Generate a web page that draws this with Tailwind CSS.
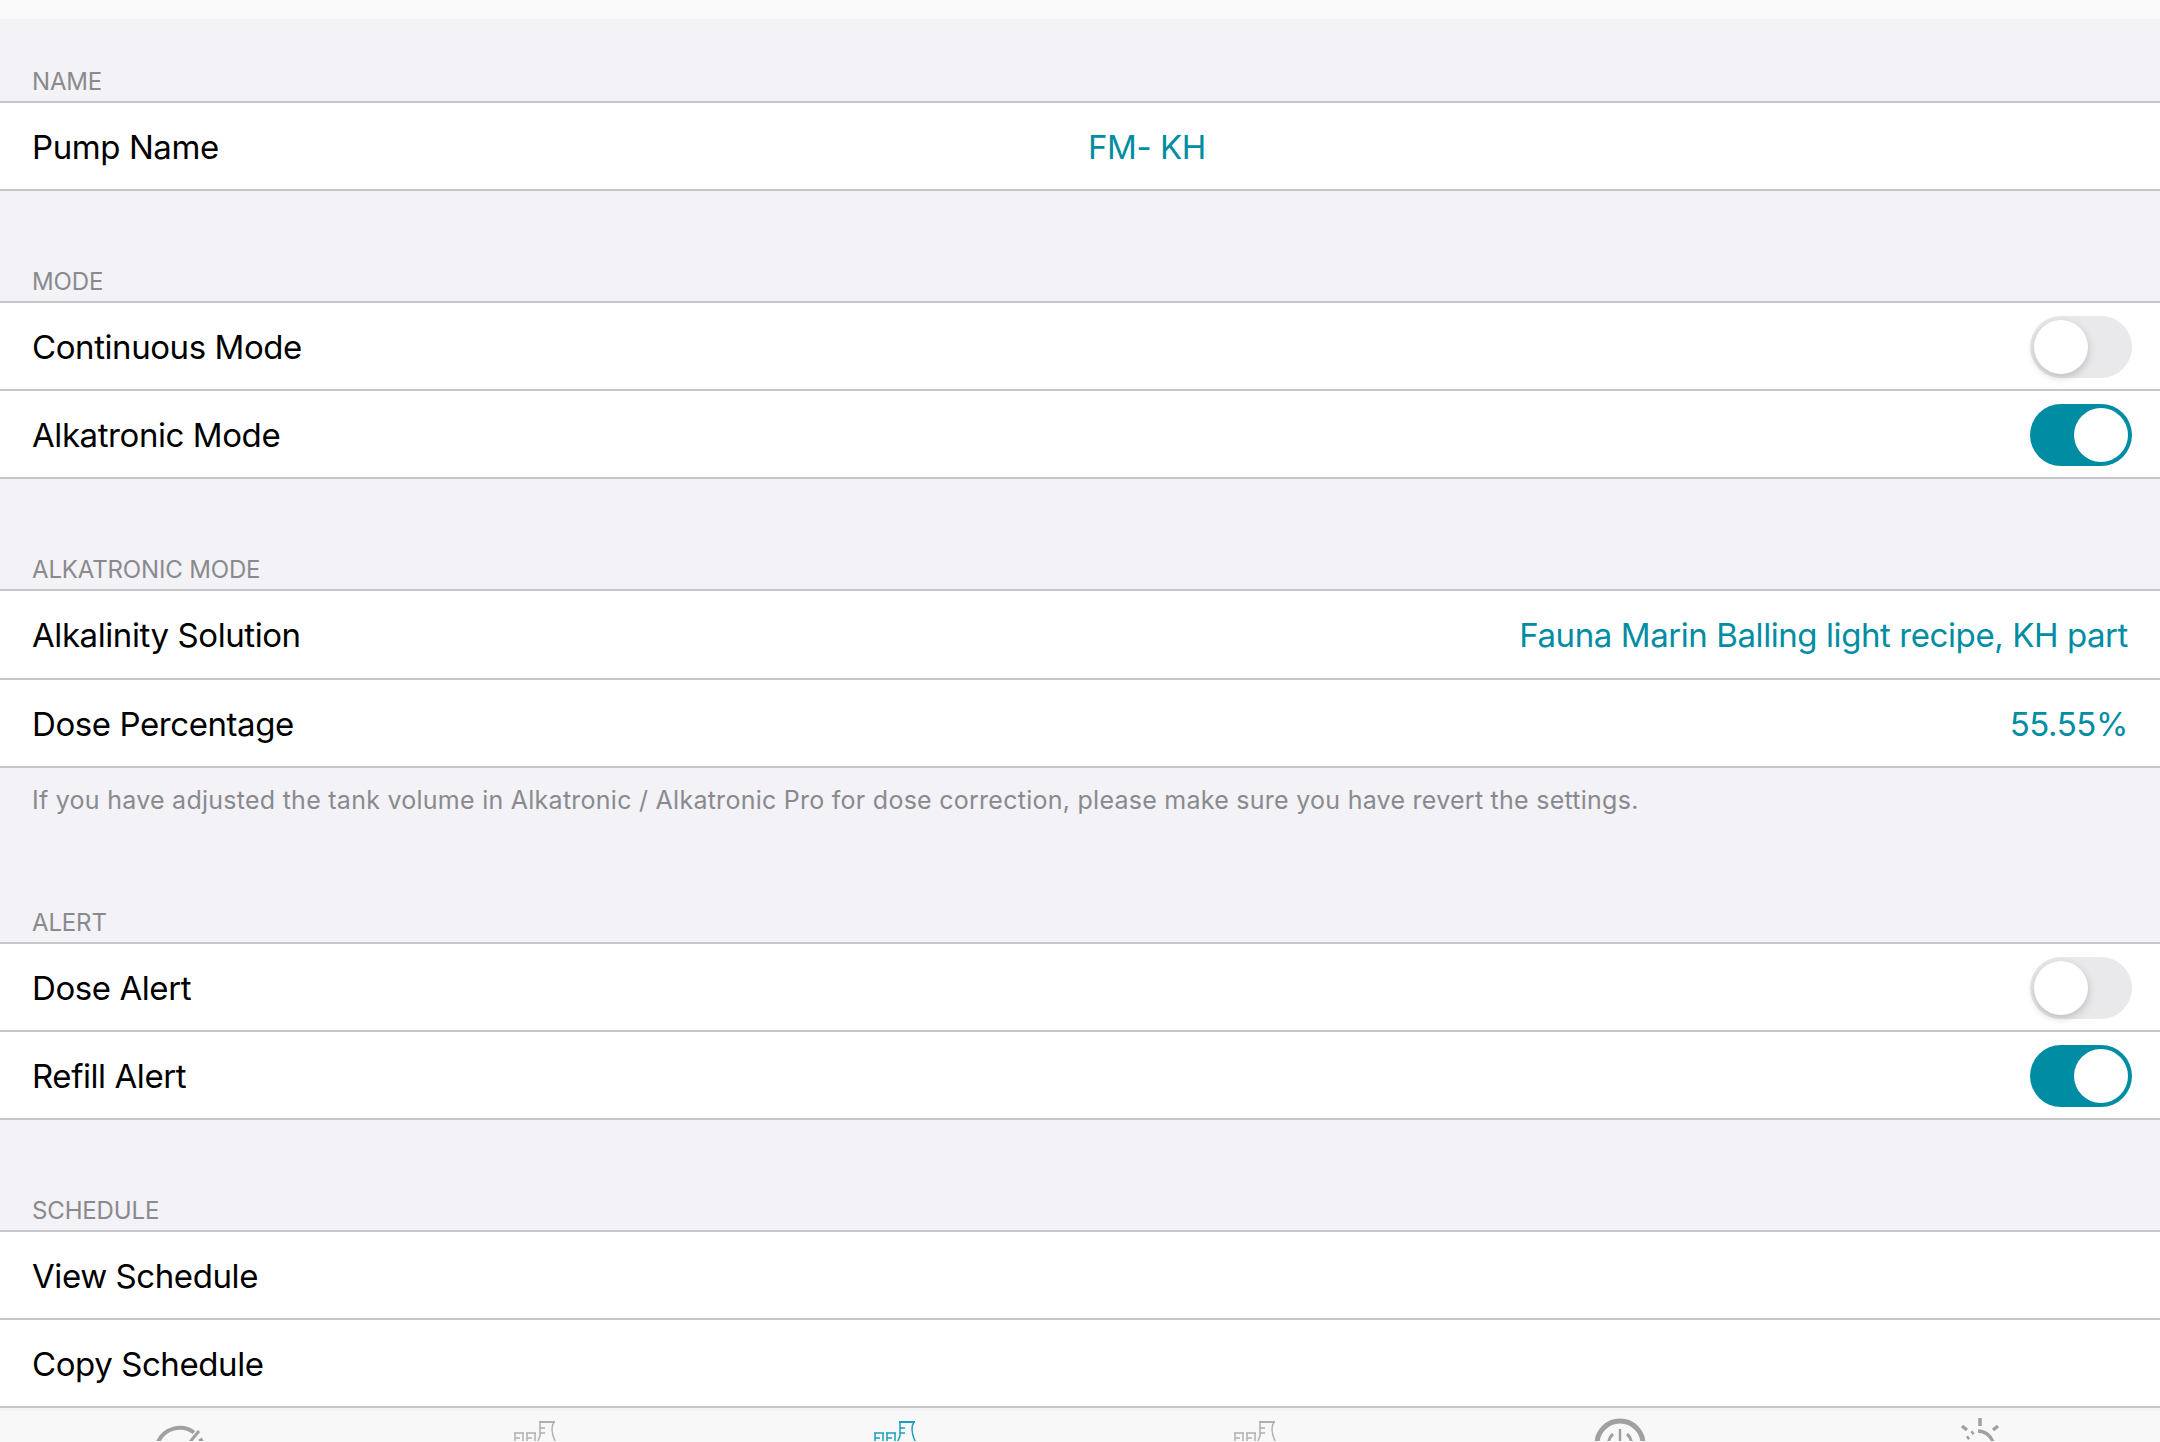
<!DOCTYPE html>
<html lang="en">
<head>
<meta charset="UTF-8">
<title>Pump Settings</title>
<script src="https://cdn.jsdelivr.net/npm/@tailwindcss/browser@4"></script>
</head>
<body class="bg-[#f2f2f7] font-['Inter',sans-serif] text-black overflow-hidden h-[1442px] flex flex-col">

  <div class="h-[19px] bg-[#f9f9f9]"></div>

  <!-- Name -->
  <div class="h-[82px] flex items-end px-8 pb-[5px] text-[24px] leading-[28px] tracking-[-0.15px] text-[#8a8a8e]">NAME</div>
  <div class="border-t-2 border-[#c6c6c8] bg-white">
    <div class="h-[88px] pt-[3px] px-8 flex items-center text-[33px] tracking-[-0.42px] border-b-2 border-[#c6c6c8]">
      <span class="w-[1056px]">Pump Name</span>
      <span class="text-[#008da3]">FM- KH</span>
    </div>
  </div>

  <!-- Mode -->
  <div class="h-[110px] flex items-end px-8 pb-[5px] text-[24px] leading-[28px] tracking-[-0.15px] text-[#8a8a8e]">MODE</div>
  <div class="border-t-2 border-[#c6c6c8] bg-white">
    <div class="h-[88px] pt-[3px] pl-8 pr-7 flex items-center justify-between text-[33px] tracking-[-0.42px] border-b-2 border-[#c6c6c8]">
      <span>Continuous Mode</span>
      <div class="w-[102px] h-[62px] mb-[2px] rounded-full bg-[#e9e9eb] p-1 flex justify-start"><div class="w-[54px] h-[54px] rounded-full bg-white shadow-[0_3px_8px_rgba(0,0,0,0.2)]"></div></div>
    </div>
    <div class="h-[88px] pt-[3px] pl-8 pr-7 flex items-center justify-between text-[33px] tracking-[-0.42px] border-b-2 border-[#c6c6c8]">
      <span>Alkatronic Mode</span>
      <div class="w-[102px] h-[62px] mb-[2px] rounded-full bg-[#008da3] p-1 flex justify-end"><div class="w-[54px] h-[54px] rounded-full bg-white"></div></div>
    </div>
  </div>

  <!-- Alkatronic -->
  <div class="h-[110px] flex items-end px-8 pb-[5px] text-[24px] leading-[28px] tracking-[-0.15px] text-[#8a8a8e]">ALKATRONIC MODE</div>
  <div class="border-t-2 border-[#c6c6c8] bg-white">
    <div class="h-[89px] pt-[3px] pl-8 pr-8 flex items-center justify-between text-[33px] tracking-[-0.42px] border-b-2 border-[#c6c6c8]">
      <span>Alkalinity Solution</span>
      <span class="text-[#008da3]">Fauna Marin Balling light recipe, KH part</span>
    </div>
    <div class="h-[88px] pt-[3px] pl-8 pr-8 flex items-center justify-between text-[33px] tracking-[-0.42px] border-b-2 border-[#c6c6c8]">
      <span>Dose Percentage</span>
      <span class="text-[#008da3]">55.55%</span>
    </div>
  </div>
  <div class="h-[64px] flex items-center px-8 text-[25px] leading-[28px] tracking-[0.26px] text-[#8a8a8e]">If you have adjusted the tank volume in Alkatronic / Alkatronic Pro for dose correction, please make sure you have revert the settings.</div>

  <!-- Alert -->
  <div class="h-[110px] flex items-end px-8 pb-[5px] text-[24px] leading-[28px] tracking-[-0.15px] text-[#8a8a8e]">ALERT</div>
  <div class="border-t-2 border-[#c6c6c8] bg-white">
    <div class="h-[88px] pt-[3px] pl-8 pr-7 flex items-center justify-between text-[33px] tracking-[-0.42px] border-b-2 border-[#c6c6c8]">
      <span>Dose Alert</span>
      <div class="w-[102px] h-[62px] mb-[2px] rounded-full bg-[#e9e9eb] p-1 flex justify-start"><div class="w-[54px] h-[54px] rounded-full bg-white shadow-[0_3px_8px_rgba(0,0,0,0.2)]"></div></div>
    </div>
    <div class="h-[88px] pt-[3px] pl-8 pr-7 flex items-center justify-between text-[33px] tracking-[-0.42px] border-b-2 border-[#c6c6c8]">
      <span>Refill Alert</span>
      <div class="w-[102px] h-[62px] mb-[2px] rounded-full bg-[#008da3] p-1 flex justify-end"><div class="w-[54px] h-[54px] rounded-full bg-white"></div></div>
    </div>
  </div>

  <!-- Schedule -->
  <div class="h-[110px] flex items-end px-8 pb-[5px] text-[24px] leading-[28px] tracking-[-0.15px] text-[#8a8a8e]">SCHEDULE</div>
  <div class="border-t-2 border-[#c6c6c8] bg-white">
    <div class="h-[88px] pt-[3px] px-8 flex items-center text-[33px] tracking-[-0.42px] border-b-2 border-[#c6c6c8]">View Schedule</div>
    <div class="h-[88px] pt-[3px] px-8 flex items-center text-[33px] tracking-[-0.42px] border-b-2 border-[#c6c6c8]">Copy Schedule</div>
  </div>

  <!-- Tab bar, cut off by the bottom of the window -->
  <div class="h-[3px]"></div>
  <div class="flex-1 bg-[#f8f8f8] grid grid-cols-6 overflow-hidden">
    <div class="flex justify-center">
      <svg class="w-[80px] h-[30px]" viewBox="0 0 80 30" fill="none" stroke="#a0a0a0" stroke-width="4">
        <path d="M18 31A24 24 0 0 1 54 21.5"/>
        <path d="M60 27.7A24 24 0 0 1 62 31"/>
        <path d="M59 20L50 31" stroke-width="3"/>
      </svg>
    </div>
    <div class="flex justify-center">
      <svg class="w-[80px] h-[30px]" viewBox="0 0 80 30" fill="none" stroke="#b0b0b0" stroke-width="1.5">
        <path d="M40 11V25L37 32M54 11Q52 14 52 18Q52 24 56 32M40 17H45M40 22H45"/>
        <path d="M39 11H55" stroke-width="2"/>
        <path d="M14 22H24M15 22V32M23 22V32M15 27H20M26 22H36M27 22V32M35 22V32M27 27H32"/>
      </svg>
    </div>
    <div class="flex justify-center">
      <svg class="w-[80px] h-[30px]" viewBox="0 0 80 30" fill="none" stroke="#1a9fbd" stroke-width="1.5">
        <path d="M40 11V25L37 32M54 11Q52 14 52 18Q52 24 56 32M40 17H45M40 22H45"/>
        <path d="M39 11H55" stroke-width="2"/>
        <path d="M14 22H24M15 22V32M23 22V32M15 27H20M26 22H36M27 22V32M35 22V32M27 27H32"/>
      </svg>
    </div>
    <div class="flex justify-center">
      <svg class="w-[80px] h-[30px]" viewBox="0 0 80 30" fill="none" stroke="#b0b0b0" stroke-width="1.5">
        <path d="M40 11V25L37 32M54 11Q52 14 52 18Q52 24 56 32M40 17H45M40 22H45"/>
        <path d="M39 11H55" stroke-width="2"/>
        <path d="M14 22H24M15 22V32M23 22V32M15 27H20M26 22H36M27 22V32M35 22V32M27 27H32"/>
      </svg>
    </div>
    <div class="flex justify-center">
      <svg class="w-[80px] h-[30px]" viewBox="0 0 80 30" fill="none" stroke="#a0a0a0" stroke-width="5">
        <circle cx="40" cy="33" r="23"/>
        <path d="M40 18V32" stroke-width="2.5"/>
        <path d="M33 23A13 13 0 0 0 28.5 31M47 23A13 13 0 0 1 51.5 31" stroke-width="3"/>
      </svg>
    </div>
    <div class="flex justify-center">
      <svg class="w-[80px] h-[30px]" viewBox="0 0 80 30" fill="none" stroke="#a0a0a0" stroke-width="3.5">
        <path d="M40 7V15M22 15L27 19M58 15L53 19"/>
        <path d="M38 20A16 16 0 0 1 53 31"/>
        <path d="M31.5 22.5L33.5 21M27 27.5L29 26"/>
      </svg>
    </div>
  </div>
</body>
</html>
